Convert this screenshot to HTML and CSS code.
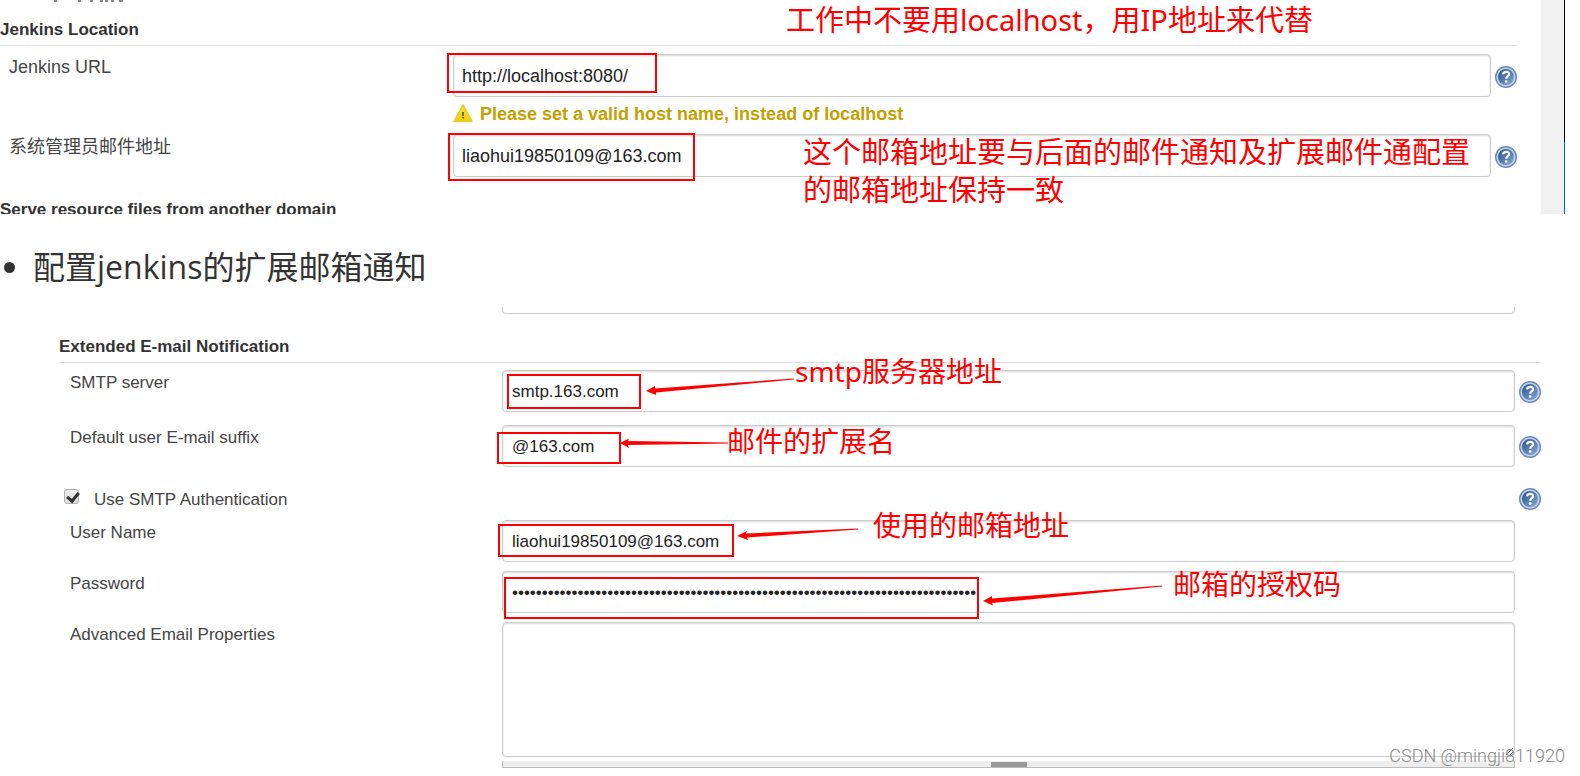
FILE: index.html
```
<!DOCTYPE html>
<html lang="zh-CN">
<head>
    <meta charset="UTF-8">
    <meta name="viewport" content="width=device-width, initial-scale=1.0">
    <title>配置jenkins的扩展邮箱通知</title>
    <link rel="stylesheet" href="styles.css">
</head>
<body>
    <svg width="0" height="0" class="defs" aria-hidden="true">
        <defs>
            <linearGradient id="blue" x1="0" y1="0" x2="1" y2="1">
                <stop offset="0" stop-color="#204a87"/>
                <stop offset="1" stop-color="#8fb0d8"/>
            </linearGradient>
            <linearGradient id="yellow" x1="0" y1="0" x2="0" y2="1">
                <stop offset="0" stop-color="#f3e24a"/>
                <stop offset="1" stop-color="#f0d000"/>
            </linearGradient>
            <symbol id="help" viewBox="0 0 22 22">
                <circle cx="11" cy="11" r="11" fill="#6b89b8"/>
                <circle cx="11" cy="11" r="8.8" fill="url(#blue)" stroke="#c5d3e8" stroke-width="1.6"/>
                <path d="M8 8.4C8.200 5 14.200 5 14 8.200C13.900 10.200 11.300 10.400 11.200 12.800" fill="none" stroke="#fff" stroke-width="2.200"/>
                <circle cx="11.2" cy="15.6" r="1.4" fill="#fff"/>
            </symbol>
        </defs>
    </svg>

    <!-- Jenkins Location -->
    <section class="shot location">
        <div class="form">
            <h2>Jenkins Location</h2>
            <div class="row">
                <label for="url">Jenkins URL</label>
                <input type="text" id="url" value="http://localhost:8080/">
                <button type="button" class="help" aria-label="help"><svg><use href="#help"/></svg></button>
            </div>
            <p class="warning">
                <svg viewBox="0 0 20 19"><path d="M10 1L19 17.5H1Z" fill="url(#yellow)" stroke="#e3cf3c" stroke-width="1.6" stroke-linejoin="round"/><path d="M10 8v4M10 13v1.600" stroke="#6b6320" stroke-width="1.800"/></svg>
                Please set a valid host name, instead of localhost
            </p>
            <div class="row">
                <label for="admin">系统管理员邮件地址</label>
                <input type="text" id="admin" value="liaohui19850109@163.com">
                <button type="button" class="help" aria-label="help"><svg><use href="#help"/></svg></button>
            </div>
            <h2 class="next">Serve resource files from another domain</h2>
        </div>
        <div class="scrollbar"></div>
        <svg class="edge" width="80" height="2" fill="#888" aria-hidden="true"><path d="M0 0h3v2H0zM24 0h3v2h-3zM36 0h3v2h-3zM46 0h3v2h-3zM51 0h3v2h-3zM57 0h3v2h-3zM65 0h4v2h-4z"/></svg>
        <span class="box box-url"></span>
        <span class="box box-admin"></span>
        <p class="note note-url">工作中不要用localhost，用IP地址来代替</p>
        <p class="note note-admin">这个邮箱地址要与后面的邮件通知及扩展邮件通配置<br>的邮箱地址保持一致</p>
    </section>

    <ul class="topic">
        <li>配置jenkins的扩展邮箱通知</li>
    </ul>

    <!-- Extended E-mail Notification -->
    <section class="shot email">
        <div class="cut"></div>
        <h2>Extended E-mail Notification</h2>
        <div class="row wide">
            <label for="smtp">SMTP server</label>
            <input type="text" id="smtp" value="smtp.163.com">
            <button type="button" class="help" aria-label="help"><svg><use href="#help"/></svg></button>
        </div>
        <div class="row wide">
            <label for="suffix">Default user E-mail suffix</label>
            <input type="text" id="suffix" value="@163.com">
            <button type="button" class="help" aria-label="help"><svg><use href="#help"/></svg></button>
        </div>
        <div class="check">
            <input type="checkbox" id="auth" checked>
            <label for="auth">Use SMTP Authentication</label>
            <button type="button" class="help" aria-label="help"><svg><use href="#help"/></svg></button>
        </div>
        <div class="row">
            <label for="user">User Name</label>
            <input type="text" id="user" value="liaohui19850109@163.com">
        </div>
        <div class="row">
            <label for="password">Password</label>
            <input type="password" id="password" value="123456789012345678901234567890123456789012345678901234567890123456789012345678">
        </div>
        <div class="row">
            <label for="props">Advanced Email Properties</label>
            <div class="area">
                <textarea id="props"></textarea>
                <div class="handle"></div>
            </div>
        </div>

        <span class="box box-smtp"></span>
        <span class="box box-suffix"></span>
        <span class="box box-user"></span>
        <span class="box box-password"></span>
        <p class="note note-smtp">smtp服务器地址</p>
        <p class="note note-suffix">邮件的扩展名</p>
        <p class="note note-user">使用的邮箱地址</p>
        <p class="note note-password">邮箱的授权码</p>
        <svg class="arrows" width="700" height="320" viewBox="500 307 700 320" fill="#f00" aria-hidden="true">
            <path d="M646 391L655 386L655 388.500L794 378.500V379.500L656 392.500L656 395Z"/>
            <path d="M620 443L629 438.500L628 441L728 442.500V443.500L628 445L629 448Z"/>
            <path d="M737 536L747 531L746 533.500L858 528.500V529.500L747 537.500L748 540Z"/>
            <path d="M983 601L992 596L992 598.500L1162 585.500V586.500L992 603L993 605.500Z"/>
        </svg>
    </section>
    <div class="watermark">CSDN @mingji811920</div>
</body>
</html>
```
FILE: styles.css
```
* { box-sizing: border-box; }
body { margin: 0; background-color: #fff; color: #444; font-family: "Liberation Sans", "Noto Sans CJK SC", sans-serif; font-size: 17px; line-height: 20px; position: relative; }
h2 { margin: 0; color: #333; font-size: 17px; line-height: 20px; font-weight: bold; }
p { margin: 0; }
.defs { display: block; }

.shot { position: relative; overflow: hidden; }

/* form rows */
.row { display: flex; align-items: flex-start; }
.row label { padding-top: 3px; flex: none; }
.row input, .row textarea { flex: 1; min-width: 0; height: 42px; padding: 2px 9px 0; border: 1px solid #ccc; border-radius: 4px; box-shadow: inset 0 1px 2px rgba(0, 0, 0, 0.15); background-color: #fff; color: #222; font-family: inherit; font-size: 17px; outline: none; }
.help { flex: none; width: 22px; height: 22px; padding: 0; border: none; background: none; cursor: pointer; }
.help svg { display: block; width: 22px; height: 22px; }
.row .help { margin-top: 11px; }

/* first form */
.location { display: flex; height: 214px; }
.location .form { flex: 1; margin-right: 24px; padding-top: 20px; }
.location h2 { padding-bottom: 5px; border-bottom: 1px solid #e5e5e5; }
.location .row { margin-top: 8px; padding-left: 9px; font-size: 18px; }
.location .row label { width: 444px; }
.location .row input { height: 43px; padding: 2px 8px 0; font-size: 18px; }
.location .help { margin-left: 4px; margin-top: 12px; }
.location .next { margin-top: 23px; border: none; }
.warning { display: flex; align-items: center; gap: 7px; height: 29px; padding: 4px 0 0 453px; color: #c4a000; font-size: 18px; font-weight: bold; }
.warning svg { width: 20px; height: 19px; }
.scrollbar { width: 24px; margin-right: 15px; background-color: #f0f0f0; border-right: 1px solid; border-image: linear-gradient(#000 142px, #0068a5 142px) 1; }
.edge { position: absolute; left: 54px; top: 0; }

/* bullet between the forms */
.topic { margin: 0; padding: 30px 0 0 33px; height: 93px; list-style: none; color: #333; font-family: "Open Sans", "Noto Sans CJK SC", sans-serif; font-size: 32px; line-height: 46px; }
.topic li { position: relative; }
.topic li::before { content: ""; position: absolute; left: -29px; top: 18px; width: 11px; height: 11px; border-radius: 50%; background-color: #333; }

/* second form */
.email { padding: 0 39px 7px 59px; }
.cut { height: 7px; margin: 0 26px 0 443px; border: 1px solid #ccc; border-top: none; border-radius: 0 0 4px 4px; }
.email h2 { margin-top: 23px; padding-bottom: 5px; border-bottom: 1px solid #ddd; }
.email .row { margin-top: 9px; padding: 0 26px 0 11px; }
.email .wide { margin-bottom: 13px; margin-top: 7px; padding-right: 0; }
.email .wide + .wide { margin-top: 13px; }
.email .row label { width: 432px; }
.email .wide .help { margin-left: 4px; }
.check { display: flex; align-items: center; margin-top: 21px; }
.check input { appearance: none; width: 15px; height: 15px; margin: 0 15px 6px 5px; border: 1px solid #b0b0b0; border-radius: 3px; background: linear-gradient(#eee, #ddd); position: relative; }
.check input:checked::before { content: ""; position: absolute; left: 4px; top: 0; width: 5px; height: 9px; border: solid #333; border-width: 0 3px 3px 0; transform: rotate(40deg); }
.check label { flex: 1; padding-top: 2px; }
.email .check + .row { margin-top: 10px; }
.area { flex: 1; }
.row textarea { display: block; width: 100%; height: 135px; resize: both; }
.handle { height: 7px; margin-top: 4px; background: linear-gradient(90deg, #999, #999) center / 36px 5px no-repeat #eee; border: 1px solid #bbb; border-top: none; }

/* red marks over the forms */
.box { position: absolute; border: 2px solid #f00; }
.box-url { left: 447px; top: 53px; width: 210px; height: 40px; }
.box-admin { left: 448px; top: 133px; width: 247px; height: 48px; }
.box-smtp { left: 507px; top: 67px; width: 134px; height: 35px; }
.box-suffix { left: 497px; top: 125px; width: 124px; height: 32px; }
.box-user { left: 498px; top: 217px; width: 236px; height: 33px; }
.box-password { left: 504px; top: 270px; width: 475px; height: 42px; }
.note { position: absolute; color: #f00; font-family: "Noto Sans", "Noto Sans CJK SC", sans-serif; font-size: 28px; line-height: 38px; white-space: nowrap; }
.location .note { font-size: 29px; }
.note-url { left: 786px; top: 1px; }
.note-admin { left: 803px; top: 133px; }
.note-smtp { left: 795px; top: 45px; }
.note-suffix { left: 727px; top: 115px; }
.note-user { left: 873px; top: 199px; }
.note-password { left: 1173px; top: 258px; }
.arrows { position: absolute; left: 500px; top: 0; }

.watermark { position: absolute; right: 15px; bottom: 7px; color: #888; font-family: Roboto, sans-serif; font-weight: 300; font-size: 18px; line-height: 24px; }
```
